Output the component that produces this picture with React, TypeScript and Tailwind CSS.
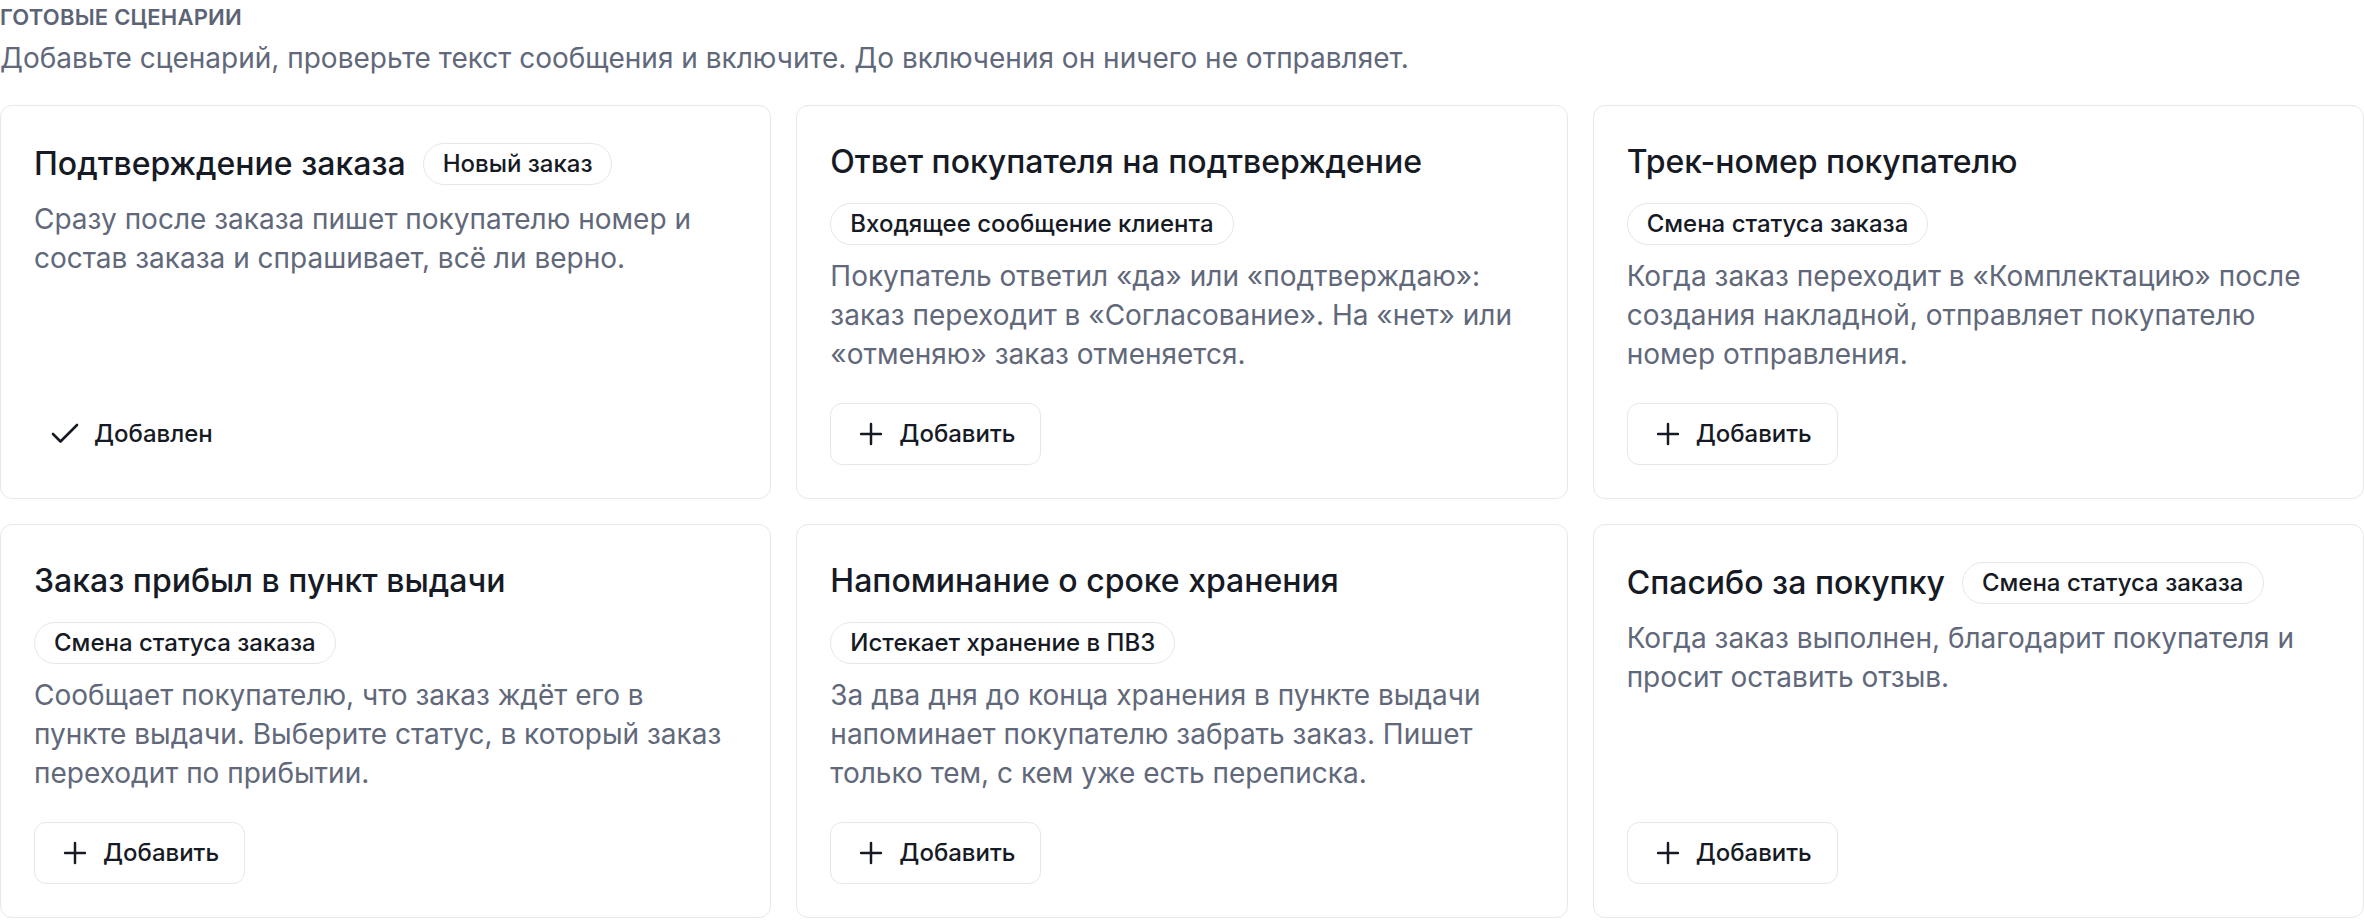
import { Check, Plus } from "lucide-react";

type Scenario = {
  title: string;
  trigger: string;
  text: string;
  inline?: boolean;
  added?: boolean;
};

const SCENARIOS: Scenario[] = [
  { title: "Подтверждение заказа", trigger: "Новый заказ", inline: true, added: true, text: "Сразу после заказа пишет покупателю номер и состав заказа и спрашивает, всё ли верно." },
  { title: "Ответ покупателя на подтверждение", trigger: "Входящее сообщение клиента", text: "Покупатель ответил «да» или «подтверждаю»: заказ переходит в «Согласование». На «нет» или «отменяю» заказ отменяется." },
  { title: "Трек-номер покупателю", trigger: "Смена статуса заказа", text: "Когда заказ переходит в «Комплектацию» после создания накладной, отправляет покупателю номер отправления." },
  { title: "Заказ прибыл в пункт выдачи", trigger: "Смена статуса заказа", text: "Сообщает покупателю, что заказ ждёт его в пункте выдачи. Выберите статус, в который заказ переходит по прибытии." },
  { title: "Напоминание о сроке хранения", trigger: "Истекает хранение в ПВЗ", text: "За два дня до конца хранения в пункте выдачи напоминает покупателю забрать заказ. Пишет только тем, с кем уже есть переписка." },
  { title: "Спасибо за покупку", trigger: "Смена статуса заказа", inline: true, text: "Когда заказ выполнен, благодарит покупателя и просит оставить отзыв." },
];

function ScenarioCard({ s }: { s: Scenario }) {
  const badge = (
    <span className="w-fit rounded-full border border-[#e6e7eb] px-[19px] py-[5px] text-[24px] font-medium leading-[30px] text-[#161a24]">{s.trigger}</span>
  );
  return (
    <div className="flex flex-col rounded-[12px] border border-[#e8e8ec] bg-white p-[33px]">
      <div className={s.inline ? "flex min-h-[49px] items-center gap-[17px]" : "flex flex-col gap-[18px]"}>
        <h3 className="text-[32px] font-medium leading-[46px] text-[#161a24]">{s.title}</h3>
        {badge}
      </div>
      <p className="mt-[12px] text-[28px] leading-[39px] text-[#61687a]">{s.text}</p>
      <div className="mt-auto pt-[29px]">
        {s.added ? (
          <div className="flex h-[62px] items-center gap-[11px] px-[13px] text-[24px] font-medium text-[#161a24]">
            <Check size={36} strokeWidth={1.75} />
            Добавлен
          </div>
        ) : (
          <button className="flex h-[62px] items-center gap-[11px] rounded-[12px] border border-[#e6e7eb] bg-white pl-[23px] pr-[25px] text-[24px] font-medium text-[#161a24]">
            <Plus size={34} strokeWidth={1.75} />
            Добавить
          </button>
        )}
      </div>
    </div>
  );
}

export default function App() {
  return (
    <div className="min-h-screen bg-white pt-[2px] font-['Inter',sans-serif]">
      <h2 className="text-[22px] font-semibold uppercase leading-[30px] tracking-[0.01em] text-[#5b6375]">Готовые сценарии</h2>
      <p className="mt-[6px] text-[28px] leading-[40px] text-[#61687a]">Добавьте сценарий, проверьте текст сообщения и включите. До включения он ничего не отправляет.</p>
      <div className="mt-[27px] grid grid-cols-3 gap-[25px]">
        {SCENARIOS.map((s) => <ScenarioCard key={s.title} s={s} />)}
      </div>
    </div>
  );
}
